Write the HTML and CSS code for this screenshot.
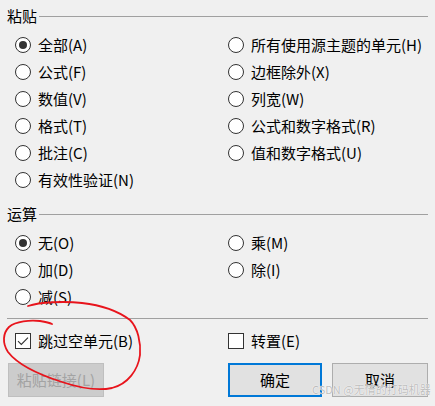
FILE: index.html
```html
<!DOCTYPE html>
<html lang="zh-CN">
<head>
<meta charset="utf-8">
<title>选择性粘贴</title>
<link rel="stylesheet" href="styles.css">
</head>
<body>
<div class="dialog">
  <div class="group-title"><span>粘贴</span><i class="rule"></i></div>
  <div class="options">
    <label class="opt"><span class="radio on"></span>全部(A)</label>
    <label class="opt"><span class="radio"></span>所有使用源主题的单元(H)</label>
    <label class="opt"><span class="radio"></span>公式(F)</label>
    <label class="opt"><span class="radio"></span>边框除外(X)</label>
    <label class="opt"><span class="radio"></span>数值(V)</label>
    <label class="opt"><span class="radio"></span>列宽(W)</label>
    <label class="opt"><span class="radio"></span>格式(T)</label>
    <label class="opt"><span class="radio"></span>公式和数字格式(R)</label>
    <label class="opt"><span class="radio"></span>批注(C)</label>
    <label class="opt"><span class="radio"></span>值和数字格式(U)</label>
    <label class="opt"><span class="radio"></span>有效性验证(N)</label>
  </div>

  <div class="group-title second"><span>运算</span><i class="rule"></i></div>
  <div class="options">
    <label class="opt"><span class="radio on"></span>无(O)</label>
    <label class="opt"><span class="radio"></span>乘(M)</label>
    <label class="opt"><span class="radio"></span>加(D)</label>
    <label class="opt"><span class="radio"></span>除(I)</label>
    <label class="opt"><span class="radio"></span>减(S)</label>
  </div>

  <div class="separator"></div>

  <div class="options checks">
    <label class="opt"><span class="check on"><svg viewBox="0 0 16 16" width="16" height="16"><path d="M3 8.2 L6.3 11.5 L13 4.6" fill="none" stroke="#333" stroke-width="1.1"/></svg></span>跳过空单元(B)</label>
    <label class="opt"><span class="check"></span>转置(E)</label>
  </div>

  <div class="buttons">
    <button class="btn disabled">粘贴链接(L)</button>
    <span class="spacer"></span>
    <button class="btn primary">确定</button>
    <button class="btn">取消</button>
  </div>

  <svg class="annot" viewBox="0 0 435 406" width="435" height="406">
    <path d="M28 306 C 40 302, 65 301, 82 303 C 100 305, 118 311, 130 320 C 138 328, 141 343, 140 355 C 138 370, 128 384, 112 388 C 98 391, 80 388, 62 382 C 40 375, 18 365, 8 352 C 2 343, 3 333, 9 327 C 16 321, 30 320, 40 321 C 46 322, 50 323, 52 324" fill="none" stroke="#e8141c" stroke-width="1.8" stroke-linecap="round"/>
  </svg>
  <div class="watermark">CSDN @无情的打码机器</div>
</div>
</body>
</html>
```

FILE: styles.css
```css
html, body {
  margin: 0;
  padding: 0;
  background: #f0f0f0;
}
.dialog {
  position: relative;
  width: 435px;
  height: 406px;
  box-sizing: border-box;
  padding: 6px 7px 0 7px;
  font-family: "Noto Sans CJK SC", "Microsoft YaHei", sans-serif;
  font-size: 15px;
  color: #000;
  overflow: hidden;
}
.group-title {
  display: flex;
  align-items: center;
  height: 20px;
  line-height: 20px;
}
.group-title span {
  padding-right: 2px;
}
.group-title .rule {
  flex: 1;
  height: 1px;
  background: #a0a0a0;
}
.group-title.second {
  margin-top: 11px;
}
.options {
  display: grid;
  grid-template-columns: 213px 1fr;
  grid-auto-rows: 27px;
  margin-top: 5px;
  padding-left: 8px;
}
.opt {
  display: flex;
  align-items: center;
  gap: 7px;
  white-space: nowrap;
  line-height: 20px;
}
.radio {
  position: relative;
  width: 16px;
  height: 16px;
  box-sizing: border-box;
  border: 1px solid #333;
  border-radius: 50%;
  background: #fff;
  flex: none;
}
.radio.on::after {
  content: "";
  position: absolute;
  left: 3px;
  top: 3px;
  width: 8px;
  height: 8px;
  border-radius: 50%;
  background: #333;
}
.separator {
  height: 1px;
  background: #a0a0a0;
  margin-top: 8px;
}
.options.checks {
  margin-top: 8px;
}
.check {
  display: block;
  width: 16px;
  height: 16px;
  box-sizing: border-box;
  border: 1px solid #333;
  background: #fff;
  flex: none;
  position: relative;
}
.check svg {
  position: absolute;
  left: -1px;
  top: -1px;
}
.buttons {
  display: flex;
  align-items: center;
  margin-top: 9px;
  padding-left: 1px;
}
.spacer {
  flex: 1;
}
.btn {
  box-sizing: border-box;
  width: 96px;
  height: 34px;
  margin: 0;
  padding: 0;
  font-family: inherit;
  font-size: 15px;
  line-height: 20px;
  color: #000;
  background: #e1e1e1;
  border: 1px solid #adadad;
  border-radius: 0;
}
.btn.disabled {
  background: #cccccc;
  border-color: #bfbfbf;
  color: #a3a3a3;
}
.btn.primary {
  width: 94px;
  border: 2px solid #0078d7;
  margin-right: 10px;
}
.annot {
  position: absolute;
  left: 0;
  top: 0;
  pointer-events: none;
}
.watermark {
  position: absolute;
  left: 312px;
  top: 382px;
  font-size: 11px;
  line-height: 15px;
  color: #bdbdbd;
  text-shadow: 0 0 1px #fff, 0 0 1px #fff;
  white-space: nowrap;
  pointer-events: none;
}
```
